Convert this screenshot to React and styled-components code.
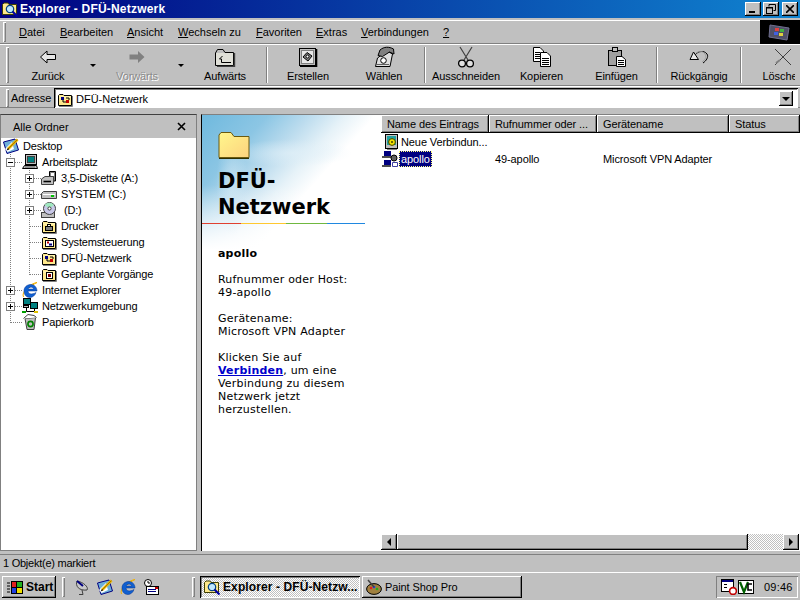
import React from 'react';
import styled, { createGlobalStyle, css } from 'styled-components';

const Global = createGlobalStyle`
  html, body { margin: 0; padding: 0; background: #c0c0c0; }
  * { box-sizing: border-box; }
  body { font-family: "Liberation Sans", Arial, sans-serif; font-size: 11px; color: #000; }
`;

const raised = css`
  box-shadow: inset -1px -1px 0 #000, inset 1px 1px 0 #fff, inset -2px -2px 0 #808080;
`;
const sunken = css`
  box-shadow: inset 1px 1px 0 #000, inset -1px -1px 0 #fff, inset 2px 2px 0 #808080;
`;
const checker = css`
  background: repeating-conic-gradient(#fff 0 25%, #c0c0c0 0 50%) 0 0 / 2px 2px;
`;

const Page = styled.div`
  width: 800px;
  height: 600px;
  overflow: hidden;
  display: flex;
  flex-direction: column;
  background: #c0c0c0;
`;

const TitleBar = styled.div`
  height: 18px;
  flex: none;
  display: flex;
  align-items: center;
  padding: 0 2px;
  gap: 2px;
  background: linear-gradient(90deg, #000080, #1084d0);
`;
const TitleText = styled.div`
  flex: 1;
  color: #fff;
  font-weight: bold;
  font-size: 12px;
  letter-spacing: 0.2px;
`;
const WinButton = styled.div`
  width: 16px;
  height: 14px;
  margin-left: ${p => p.$gap || 0}px;
  background: #c0c0c0;
  display: flex;
  align-items: center;
  justify-content: center;
  ${raised}
`;

const Band = styled.div`
  flex: none;
  height: ${p => p.$h}px;
  margin-top: ${p => p.$mt || 0}px;
  padding-top: ${p => p.$pt || 0}px;
  display: flex;
  align-items: center;
  overflow: hidden;
  box-shadow: inset 0 1px 0 #fff, inset 0 -1px 0 #808080;
`;
const Grip = styled.div`
  flex: none;
  width: 3px;
  height: ${p => p.$h || 20}px;
  margin-left: ${p => p.$left}px;
  margin-right: ${p => p.$right || 0}px;
  box-shadow: inset 1px 1px 0 #fff, inset -1px -1px 0 #808080;
`;

const MenuItem = styled.div`
  width: ${p => p.$w}px;
  flex: none;
  u { text-decoration: underline; }
`;
const LogoBox = styled.div`
  margin-left: auto;
  width: 40px;
  height: 24px;
  background: #000;
  display: flex;
  align-items: center;
  justify-content: center;
`;

const ToolRow = styled.div`
  width: 795px;
  display: flex;
  align-items: center;
  overflow: hidden;
`;
const ToolButton = styled.div`
  flex: none;
  width: ${p => p.$w}px;
  height: 40px;
  display: flex;
  flex-direction: column;
  align-items: center;
  justify-content: flex-end;
  gap: 1px;
  padding-bottom: 3px;
  white-space: nowrap;
  letter-spacing: -0.1px;
  color: ${p => (p.$off ? '#8a8a8a' : '#000')};
  text-shadow: ${p => (p.$off ? '1px 1px 0 #fff' : 'none')};
`;
const ToolIcon = styled.div`
  height: 24px;
  display: flex;
  align-items: center;
  justify-content: center;
`;
const DropCell = styled.div`
  flex: none;
  width: ${p => p.$w}px;
  display: flex;
  justify-content: center;
  &::after {
    content: '';
    border: 3px solid transparent;
    border-top: 3px solid #000;
    border-bottom: 0;
  }
`;
const ToolSep = styled.div`
  flex: none;
  width: 2px;
  height: 36px;
  margin: 0 2px;
  box-shadow: inset 1px 0 0 #808080, inset -1px 0 0 #fff;
`;

const AddressLabel = styled.div`
  margin: 0 5px 0 2px;
  width: 38px;
  flex: none;
`;
const AddressField = styled.div`
  flex: 1;
  height: 20px;
  background: #fff;
  margin-right: 2px;
  display: flex;
  align-items: center;
  padding: 1px 5px 0 3px;
  gap: 3px;
  ${sunken}
`;
const ComboButton = styled.div`
  margin-left: auto;
  width: 14px;
  height: 15px;
  background: #c0c0c0;
  display: flex;
  align-items: center;
  justify-content: center;
  ${raised}
  &::after {
    content: '';
    border: 4px solid transparent;
    border-top: 4px solid #000;
    border-bottom: 0;
  }
`;

const Main = styled.div`
  margin-top: 6px;
  height: 437px;
  flex: none;
  display: flex;
`;
const TreePane = styled.div`
  width: 197px;
  flex: none;
  background: #fff;
  border: 1px solid #808080;
  border-top-color: #404040;
`;
const TreeHeader = styled.div`
  height: 23px;
  background: #c0c0c0;
  display: flex;
  align-items: center;
  justify-content: space-between;
  padding: 0 10px 0 12px;
`;
const TreeRow = styled.div`
  height: 16px;
  display: flex;
  align-items: center;
  white-space: nowrap;
`;
const TreeCell = styled.div`
  position: relative;
  flex: none;
  width: 19px;
  height: 16px;
  ${p => (p.$kind === 'pipe' || p.$kind === 'branch' || p.$kind === 'box' || p.$kind === 'minus') && css`
    background-image: repeating-linear-gradient(#808080 0 1px, transparent 1px 2px);
    background-size: 1px 100%;
    background-position: 9px 0;
    background-repeat: no-repeat;
  `}
  ${p => p.$kind === 'last' && css`
    background-image: repeating-linear-gradient(#808080 0 1px, transparent 1px 2px);
    background-size: 1px 9px;
    background-position: 9px 0;
    background-repeat: no-repeat;
  `}
  ${p => p.$kind !== 'pipe' && p.$kind !== 'none' && css`
    &::after {
      content: '';
      position: absolute;
      left: 10px;
      right: -2px;
      top: 8px;
      height: 1px;
      background: repeating-linear-gradient(90deg, #808080 0 1px, transparent 1px 2px);
    }
  `}
`;
const Expander = styled.div`
  position: absolute;
  z-index: 1;
  left: 5px;
  top: 4px;
  width: 9px;
  height: 9px;
  background: #fff;
  border: 1px solid #808080;
  &::before {
    content: '';
    position: absolute;
    left: 1px;
    right: 1px;
    top: 3px;
    height: 1px;
    background: #000;
  }
  ${p => p.$plus && css`
    &::after {
      content: '';
      position: absolute;
      top: 1px;
      bottom: 1px;
      left: 3px;
      width: 1px;
      background: #000;
    }
  `}
`;
const TreeIconSlot = styled.div`
  flex: none;
  width: 16px;
  height: 16px;
  margin-left: 2px;
  margin-right: 4px;
  display: flex;
`;
const TreeLabel = styled.span`
  letter-spacing: -0.15px;
  white-space: pre;
`;

const Splitter = styled.div`
  width: 4px;
  flex: none;
`;
const ContentPane = styled.div`
  flex: 1;
  display: flex;
  border-top: 1px solid #808080;
  border-left: 1px solid #000;
  background: #fff;
  min-width: 0;
`;
const InfoPane = styled.div`
  width: 179px;
  flex: none;
  display: flex;
  flex-direction: column;
  padding-top: 17px;
  font-family: "DejaVu Sans", Verdana, sans-serif;
  font-size: 11px;
  line-height: 13px;
  background:
    radial-gradient(ellipse 60px 14px at 90px 38px, rgba(225,240,248,.7), transparent),
    radial-gradient(ellipse 16px 50px at 30px 70px, rgba(215,235,245,.6), transparent),
    linear-gradient(to bottom, rgba(255,255,255,0) 70px, #fff 135px) 0 0 / 179px 135px no-repeat,
    linear-gradient(132deg, #6fb9de 0, #8cc6e4 22%, #bcdcee 36%, #e6f2f8 48%, #fff 58%) 0 0 / 179px 135px no-repeat;
`;
const InfoIcon = styled.div`
  margin-left: 16px;
  height: 27px;
`;
const InfoTitle = styled.div`
  margin: 9px 0 0 16px;
  font-size: 21px;
  line-height: 26px;
  font-weight: bold;
`;
const Rainbow = styled.div`
  display: flex;
  height: 1px;
  width: 163px;
  margin-top: 3px;
`;
const RainbowPart = styled.div`
  width: ${p => p.$w}px;
  background: ${p => p.$c};
`;
const InfoBody = styled.div`
  margin: 23px 0 0 16px;
  width: 160px;
  letter-spacing: 0.2px;
`;
const InfoPara = styled.p`
  margin: 0 0 13px;
`;
const InfoLink = styled.span`
  color: #0000cc;
  font-weight: bold;
  text-decoration: underline;
`;

const ListPane = styled.div`
  flex: 1;
  min-width: 0;
  display: flex;
  flex-direction: column;
  background: #fff;
`;
const ColHeader = styled.div`
  display: flex;
  height: 18px;
  flex: none;
`;
const ColCell = styled.div`
  flex: none;
  width: ${p => p.$w}px;
  background: #c0c0c0;
  display: flex;
  align-items: center;
  padding-left: 6px;
  letter-spacing: -0.1px;
  white-space: nowrap;
  ${raised}
`;
const ListBody = styled.div`
  flex: 1;
`;
const ListRow = styled.div`
  height: 17px;
  display: flex;
  align-items: center;
  white-space: nowrap;
  letter-spacing: -0.1px;
`;
const NameCell = styled.div`
  width: 114px;
  flex: none;
  display: flex;
  align-items: center;
  padding-left: ${p => (p.$sel ? 1 : 3)}px;
  gap: 1px;
`;
const Selected = styled.span`
  background: #000080;
  color: #fff;
  outline: 1px dotted #ffff80;
  outline-offset: -1px;
  padding: 0 2px;
  line-height: 16px;
`;
const ValueCell = styled.div`
  width: ${p => p.$w}px;
  flex: none;
`;
const ScrollBar = styled.div`
  height: 17px;
  flex: none;
  display: flex;
  padding-right: 1px;
`;
const ScrollButton = styled.div`
  width: 16px;
  height: 16px;
  flex: none;
  background: #c0c0c0;
  display: flex;
  align-items: center;
  justify-content: center;
  ${raised}
  &::after {
    content: '';
    border: 4px solid transparent;
    ${p => (p.$left
      ? 'border-right: 4px solid #000; border-left: 0;'
      : 'border-left: 4px solid #000; border-right: 0;')}
  }
`;
const ScrollThumb = styled.div`
  width: 351px;
  height: 16px;
  flex: none;
  background: #c0c0c0;
  ${raised}
`;
const ScrollTrack = styled.div`
  flex: 1;
  height: 16px;
  ${checker}
`;

const StatusBar = styled.div`
  margin-top: 3px;
  height: 17px;
  flex: none;
  display: flex;
  align-items: center;
  padding-left: 3px;
  box-shadow: inset 0 1px 0 #808080;
  letter-spacing: -0.25px;
`;

const TaskBar = styled.div`
  margin-top: 1px;
  flex: 1;
  display: flex;
  align-items: center;
  padding: 2px 2px 0;
  box-shadow: inset 0 1px 0 #fff;
`;
const StartButton = styled.div`
  width: 54px;
  height: 22px;
  flex: none;
  display: flex;
  align-items: center;
  gap: 2px;
  padding-left: 4px;
  font-weight: bold;
  font-size: 12px;
  ${raised}
`;
const QuickIcon = styled.div`
  width: 16px;
  height: 16px;
  flex: none;
  margin-left: ${p => p.$left}px;
  display: flex;
`;
const TaskButton = styled.div`
  width: 160px;
  height: 22px;
  flex: none;
  margin-left: ${p => p.$left || 0}px;
  display: flex;
  align-items: center;
  gap: 3px;
  padding-left: 4px;
  white-space: nowrap;
  overflow: hidden;
  font-size: ${p => (p.$active ? 12 : 11)}px;
  font-weight: ${p => (p.$active ? 'bold' : 'normal')};
  letter-spacing: ${p => (p.$active ? 0.1 : -0.1)}px;
  ${p => (p.$active ? checker : '')}
  ${p => (p.$active ? sunken : raised)}
`;
const Tray = styled.div`
  margin-left: auto;
  width: 82px;
  height: 22px;
  flex: none;
  display: flex;
  align-items: center;
  padding-left: 5px;
  gap: 1px;
  box-shadow: inset 1px 1px 0 #808080, inset -1px -1px 0 #fff;
`;
const Clock = styled.div`
  margin-left: 9px;
  letter-spacing: 0.2px;
`;

const Ico = ({ w = 16, h = 16, children }) => (
  <svg width={w} height={h} viewBox={`0 0 ${w} ${h}`} style={{ display: 'block' }}>{children}</svg>
);

const Folder = ({ children }) => (
  <Ico>
    <path d="M1.5 4.5 L2.5 3.5 H6 L7 4.5 H14.5 V14.5 H1.5 Z" fill="#ffe98c" stroke="#000" />
    <path d="M2 6 H14" stroke="#fff8c8" />
    <path d="M15.5 5 V15.5 H2" stroke="#808080" fill="none" />
    {children}
  </Ico>
);

const ExplorerIcon = () => (
  <Ico>
    <path d="M0.5 3.5 L2 2 H6 L7 3.5 H14.5 V13.5 H0.5 Z" fill="#ffe98c" stroke="#404000" />
    <circle cx="8" cy="8" r="3.7" fill="#bfe8ff" stroke="#004080" strokeWidth="1.2" />
    <path d="M10.5 10.5 L15.5 15.5" stroke="#0000a0" strokeWidth="2.2" />
  </Ico>
);

const DialFolder = () => (
  <Folder>
    <rect x="4" y="6" width="3" height="3" fill="#000080" />
    <rect x="9" y="9" width="3" height="3" fill="#c00000" />
    <path d="M6 9 V11 H9 M9 7 H12 V9" stroke="#000" fill="none" />
  </Folder>
);
const PrinterFolder = () => (
  <Folder>
    <rect x="4.5" y="8.5" width="7" height="4" fill="#808080" stroke="#000" />
    <rect x="6.5" y="6.5" width="3" height="2" fill="#fff" stroke="#000" />
  </Folder>
);
const ControlFolder = () => (
  <Folder>
    <rect x="4.5" y="6.5" width="8" height="6" fill="#fff" stroke="#000" />
    <path d="M6 8.5 H8" stroke="#c00000" strokeWidth="2" />
    <path d="M8 10.5 H11" stroke="#000080" strokeWidth="2" />
  </Folder>
);
const TaskFolder = () => (
  <Folder>
    <rect x="5.5" y="6.5" width="6" height="6" fill="#fff" stroke="#000" />
    <rect x="7" y="8" width="3" height="3" fill="#800000" />
  </Folder>
);

const DesktopIcon = () => (
  <Ico>
    <path d="M0.5 4 L12 1 L15.5 12 L4 15.5 Z" fill="#6fb0d8" stroke="#000080" />
    <path d="M2 11 L9 4 L11 11 L4.5 14 Z" fill="#fff" />
    <path d="M5 11 L14.5 1.5" stroke="#e8b800" strokeWidth="2.6" />
    <path d="M5 11 L14.5 1.5" stroke="#804000" strokeWidth="0.6" />
    <path d="M3.5 12.5 L5 10 L6 11.5 Z" fill="#000" />
  </Ico>
);
const ComputerIcon = () => (
  <Ico>
    <rect x="3.5" y="0.5" width="11" height="10" fill="#c0c0c0" stroke="#000" />
    <rect x="5.5" y="2.5" width="7" height="6" fill="#008080" stroke="#404040" />
    <path d="M2.5 11.5 H14.5 L15.5 14.5 H0.5 Z" fill="#c0c0c0" stroke="#000" />
    <path d="M3 13 H13" stroke="#606060" />
  </Ico>
);
const FloppyIcon = () => (
  <Ico>
    <path d="M8.5 1.5 H14.5 V11 H8.5 Z" fill="#808080" stroke="#000" />
    <rect x="10" y="3" width="3" height="3" fill="#fff" />
    <path d="M0.5 9 L4 6.5 H12.5 V14.5 H0.5 Z" fill="#c0c0c0" stroke="#404040" />
    <path d="M2.5 11.5 H10" stroke="#000" strokeWidth="1.6" />
  </Ico>
);
const DriveIcon = () => (
  <Ico>
    <path d="M0.5 7.5 L2.5 5.5 H15.5 V12.5 H0.5 Z" fill="#c0c0c0" stroke="#404040" />
    <path d="M2 8.5 H14" stroke="#fff" />
    <rect x="10" y="9" width="3" height="2" fill="#00c000" />
  </Ico>
);
const CdIcon = () => (
  <Ico>
    <rect x="0.5" y="10.5" width="13" height="5" fill="#c0c0c0" stroke="#404040" />
    <circle cx="8.5" cy="6.5" r="6" fill="#c8c8e8" stroke="#404040" />
    <path d="M8.5 6.5 L3.5 3 A6 6 0 0 1 13 3 Z" fill="#a0e8c0" />
    <circle cx="8.5" cy="6.5" r="1.6" fill="#fff" stroke="#404040" />
  </Ico>
);
const IeIcon = () => (
  <Ico>
    <path d="M1.5 15 C-1 10 8 1.5 15 0.5 C12 2 9 4 7 6" stroke="#f0b000" fill="none" />
    <path d="M2 9 C2 5 5 2.5 9 2.5 C12.5 2.5 15 5.5 15 9 H6 C6 12 10 13 14 10.5 C13 14 10 15.5 8 15.5 C4 15.5 2 12.5 2 9 Z M6 7 H11.5 C11.5 4.5 7 4.5 6 7 Z" fill="#1060d0" fillRule="evenodd" stroke="#003090" strokeWidth="0.5" />
  </Ico>
);
const NetworkIcon = () => (
  <Ico>
    <rect x="1.5" y="0.5" width="7" height="6" fill="#008080" stroke="#000" />
    <rect x="8.5" y="4.5" width="7" height="6" fill="#008080" stroke="#000" />
    <rect x="1.5" y="7.5" width="5" height="2" fill="#c0c0c0" stroke="#000" />
    <path d="M4.5 10 V13.5 H12.5 V11" stroke="#000" fill="none" />
    <path d="M0 14 H4" stroke="#00a000" strokeWidth="2" />
    <path d="M12 14 H16" stroke="#e0c000" strokeWidth="2" />
  </Ico>
);
const BinIcon = () => (
  <Ico>
    <path d="M3 4.5 L13.5 3.5 L12 15.5 H5 Z" fill="#c0c0c0" stroke="#404040" />
    <path d="M1.5 4.5 L6 0.5 L12 1.5 L14.5 3.5" fill="#fff" stroke="#404040" />
    <circle cx="8.5" cy="10" r="2.6" fill="none" stroke="#008000" strokeWidth="1.6" />
  </Ico>
);

const BackIcon = () => (
  <Ico w={16} h={14}>
    <path d="M0.5 7 L7 1 V4.5 H15.5 V9.5 H7 V13 Z" fill="#e6e6e6" stroke="#000" />
  </Ico>
);
const ForwardIcon = () => (
  <Ico w={16} h={14}>
    <path d="M15.5 7 L9 1 V4.5 H0.5 V9.5 H9 V13 Z" fill="#808080" />
  </Ico>
);
const UpIcon = () => (
  <Ico w={22} h={19}>
    <path d="M1.5 5 L3.5 1.5 H9 L11 4.5 H19.5 V17.5 H1.5 Z" fill="#c0c0c0" stroke="#000" />
    <rect x="2" y="5" width="17" height="12" fill="#e0e0d8" />
    <path d="M8.5 8 L5.5 11 H7.5 V14.5 H17" stroke="#000" fill="none" />
    <path d="M20.5 5 V18.5 H3" stroke="#404040" fill="none" strokeWidth="1.4" />
  </Ico>
);
const CreateIcon = () => (
  <Ico w={20} h={20}>
    <rect x="1.5" y="1.5" width="16" height="17" fill="#c0c0c0" stroke="#000" />
    <rect x="3.5" y="3.5" width="12" height="13" fill="#e8e8e8" stroke="#808080" />
    <path d="M5 10 L9 5.5 L14 9 L10 14 Z" fill="#808080" stroke="#000" />
    <circle cx="9.5" cy="9.5" r="1.5" fill="#fff" stroke="#000" />
    <path d="M18.5 2 V19.5 H2" stroke="#000" fill="none" strokeWidth="1.6" />
  </Ico>
);
const PhoneIcon = () => (
  <Ico w={22} h={22}>
    <path d="M4.5 12 L14 5 L19.5 8 L17 20.5 H2.5 Z" fill="#e0e0e0" stroke="#000" />
    <path d="M7 4 C11 0.5 16 0.5 20.5 3 L21 8 L16.5 6 L9.5 10.5 L5 9.5 Z" fill="#808080" stroke="#000" />
    <circle cx="10.5" cy="14.5" r="2.8" fill="#fff" stroke="#000" />
    <path d="M3 18.5 H16" stroke="#606060" />
  </Ico>
);
const ScissorsIcon = () => (
  <Ico w={18} h={22}>
    <path d="M3 1 L11 14 M15 1 L7 14" stroke="#404040" strokeWidth="1.2" />
    <circle cx="5" cy="17.5" r="3.4" fill="#e0e0e0" stroke="#000" strokeWidth="1.3" />
    <circle cx="13" cy="17.5" r="3.4" fill="#e0e0e0" stroke="#000" strokeWidth="1.3" />
  </Ico>
);
const CopyIcon = () => (
  <Ico w={20} h={20}>
    <path d="M1.5 0.5 H8 L11.5 4 V14.5 H1.5 Z" fill="#fff" stroke="#000" />
    <path d="M3 5.5 H8 M3 7.5 H8 M3 9.5 H8 M3 11.5 H8" stroke="#000" />
    <path d="M8.5 5.5 H15 L18.5 9 V19.5 H8.5 Z" fill="#fff" stroke="#000" />
    <path d="M10 11.5 H17 M10 13.5 H17 M10 15.5 H17 M10 17.5 H17" stroke="#000" />
  </Ico>
);
const PasteIcon = () => (
  <Ico w={20} h={20}>
    <rect x="1.5" y="3.5" width="13" height="15" fill="#a0a0a0" stroke="#000" />
    <rect x="5.5" y="0.5" width="5" height="4" fill="#c0c0c0" stroke="#000" />
    <path d="M9.5 9.5 H15 L18.5 12.5 V19.5 H9.5 Z" fill="#fff" stroke="#000" />
    <path d="M11 13.5 H17 M11 15.5 H17 M11 17.5 H17" stroke="#000" />
  </Ico>
);
const UndoIcon = () => (
  <Ico w={20} h={18}>
    <path d="M6 7 C9 3 15 2 18 6 C20 9 17 13 14 15" fill="none" stroke="#000" />
    <path d="M7 5 C10 3 14 3 16 6 C18 9 16 12 13 14" fill="none" stroke="#a0a0a0" />
    <path d="M1 11.5 H9.5 L4.5 4 Z" fill="#e6e6e6" stroke="#000" />
  </Ico>
);
const DeleteIcon = () => (
  <Ico w={20} h={20}>
    <path d="M2 2 L18 18" stroke="#404040" />
    <path d="M18 2 L2 18" stroke="#404040" />
    <path d="M3 16 L7 13" stroke="#808080" strokeWidth="2" />
  </Ico>
);

const BigFolder = () => (
  <Ico w={32} h={27}>
    <defs>
      <linearGradient id="bigFolderFill" x1="0" y1="0" x2="1" y2="1">
        <stop offset="0" stopColor="#fff78c" />
        <stop offset="1" stopColor="#fdd27e" />
      </linearGradient>
    </defs>
    <path d="M1 25.5 V3 L3 0.5 H13 L16 4.5 H31 V25.5 Z" fill="url(#bigFolderFill)" stroke="#6a5a10" />
    <path d="M1 26.5 H31" stroke="#303000" />
  </Ico>
);
const NewConnIcon = () => (
  <Ico>
    <rect x="1.5" y="0.5" width="12" height="14" fill="#c0c0c0" stroke="#000" />
    <rect x="3" y="2" width="9" height="9" fill="#20a0a0" />
    <circle cx="8" cy="8" r="3.4" fill="#f0e000" stroke="#404000" />
    <circle cx="8" cy="8" r="1" fill="#404000" />
    <path d="M3 15.5 H13" stroke="#808080" />
  </Ico>
);
const ConnIcon = () => (
  <Ico>
    <rect x="2" y="0" width="7" height="5" fill="#000080" />
    <path d="M0 6 H9" stroke="#000" strokeWidth="1.4" />
    <rect x="2" y="9" width="7" height="5" fill="#000080" />
    <path d="M0 15 H9" stroke="#000" strokeWidth="1.4" />
    <circle cx="12" cy="7" r="3" fill="#606060" stroke="#000" />
    <path d="M10.5 11.5 H15.5 V15.5 H10.5 Z" fill="#fff" stroke="#4040a0" />
  </Ico>
);

const Flag = () => (
  <Ico w={18} h={16}>
    <path d="M1 4 H4 M1 7 H4 M1 10 H4 M1 13 H4" stroke="#000" />
    <rect x="5.5" y="2.5" width="5" height="6" fill="#e02020" stroke="#000" />
    <rect x="10.5" y="2.5" width="6" height="6" fill="#20b020" stroke="#000" />
    <rect x="5.5" y="8.5" width="5" height="6" fill="#2040e0" stroke="#000" />
    <rect x="10.5" y="8.5" width="6" height="6" fill="#f0e000" stroke="#000" />
  </Ico>
);
const LogoIcon = () => (
  <Ico w={24} h={20}>
    <path d="M2 3 L21 6 L19 18 L1 15 Z" fill="#505068" stroke="#707090" />
    <rect x="7" y="6" width="4" height="3" fill="#e04040" />
    <rect x="12" y="7" width="4" height="3" fill="#40b040" />
    <rect x="6" y="10" width="4" height="3" fill="#4060e0" />
    <rect x="11" y="11" width="4" height="3" fill="#e0d040" />
  </Ico>
);
const DishIcon = () => (
  <Ico>
    <path d="M3 2 C1 7 5 12 13 11 C15 8 9 3 3 2 Z" fill="#c8c8c8" stroke="#404040" />
    <path d="M3 2 L9 7" stroke="#000080" strokeWidth="2" />
    <path d="M8 11 L9 15.5 H5" stroke="#404040" fill="none" />
  </Ico>
);
const MailClockIcon = () => (
  <Ico>
    <circle cx="5" cy="4" r="3.5" fill="#fff" stroke="#000" />
    <path d="M5 2 V4 H7" stroke="#000" fill="none" />
    <rect x="3.5" y="7.5" width="12" height="8" fill="#fff" stroke="#000" />
    <path d="M5 10.5 H13 M5 12.5 H13" stroke="#000080" />
    <rect x="12" y="8" width="3" height="2" fill="#c00000" />
  </Ico>
);
const PaletteIcon = () => (
  <Ico>
    <ellipse cx="8" cy="10" rx="7.4" ry="5.4" fill="#a08040" stroke="#000" />
    <circle cx="5" cy="9" r="1.3" fill="#e02020" />
    <circle cx="8" cy="8" r="1.3" fill="#2040e0" />
    <circle cx="11" cy="10" r="1.3" fill="#20b020" />
    <path d="M2 1 L8 8" stroke="#404040" strokeWidth="1.5" />
  </Ico>
);
const CalendarIcon = () => (
  <Ico>
    <rect x="0.5" y="0.5" width="12" height="12" fill="#fff" stroke="#000" />
    <path d="M1 2 H12" stroke="#000080" strokeWidth="2" />
    <path d="M3 5.5 H6 M3 8.5 H6" stroke="#000" />
    <circle cx="12" cy="12" r="3.4" fill="#fff" stroke="#c00000" strokeWidth="1.6" />
  </Ico>
);
const VcIcon = () => (
  <Ico>
    <rect x="0.5" y="1.5" width="15" height="13" fill="#fff" stroke="#000" />
    <path d="M2 3 L6 13 L10 3" stroke="#006000" strokeWidth="2.2" fill="none" />
    <path d="M14 5 H10 V11 H14" stroke="#000" strokeWidth="1.6" fill="none" />
  </Ico>
);

const menu = [
  ['D', 'atei', 41], ['B', 'earbeiten', 67], ['A', 'nsicht', 51], ['W', 'echseln zu', 78],
  ['F', 'avoriten', 60], ['E', 'xtras', 45], ['V', 'erbindungen', 82], ['?', '', 20],
];

const tools = [
  { label: 'Zurück', w: 78, icon: <BackIcon />, drop: 11 },
  { label: 'Vorwärts', w: 78, icon: <ForwardIcon />, drop: 10, off: true },
  { label: 'Aufwärts', w: 78, icon: <UpIcon />, sep: true },
  { label: 'Erstellen', w: 76, icon: <CreateIcon /> },
  { label: 'Wählen', w: 76, icon: <PhoneIcon />, sep: true },
  { label: 'Ausschneiden', w: 76, icon: <ScissorsIcon /> },
  { label: 'Kopieren', w: 75, icon: <CopyIcon /> },
  { label: 'Einfügen', w: 75, icon: <PasteIcon />, sep: true },
  { label: 'Rückgängig', w: 78, icon: <UndoIcon />, sep: true },
  { label: 'Löschen', w: 78, icon: <DeleteIcon /> },
];

const tree = [
  { cells: [], icon: <DesktopIcon />, label: 'Desktop' },
  { cells: ['minus'], icon: <ComputerIcon />, label: 'Arbeitsplatz' },
  { cells: ['pipe', 'box'], icon: <FloppyIcon />, label: '3,5-Diskette (A:)' },
  { cells: ['pipe', 'box'], icon: <DriveIcon />, label: 'SYSTEM (C:)' },
  { cells: ['pipe', 'box'], icon: <CdIcon />, label: ' (D:)' },
  { cells: ['pipe', 'branch'], icon: <PrinterFolder />, label: 'Drucker' },
  { cells: ['pipe', 'branch'], icon: <ControlFolder />, label: 'Systemsteuerung' },
  { cells: ['pipe', 'branch'], icon: <DialFolder />, label: 'DFÜ-Netzwerk' },
  { cells: ['pipe', 'last'], icon: <TaskFolder />, label: 'Geplante Vorgänge' },
  { cells: ['box'], icon: <IeIcon />, label: 'Internet Explorer' },
  { cells: ['box'], icon: <NetworkIcon />, label: 'Netzwerkumgebung' },
  { cells: ['last'], icon: <BinIcon />, label: 'Papierkorb' },
];

export default function App() {
  return (
    <Page>
      <Global />
      <TitleBar>
        <ExplorerIcon />
        <TitleText>Explorer - DFÜ-Netzwerk</TitleText>
        <WinButton>
          <Ico w={8} h={8}><path d="M0 7 H6" stroke="#000" strokeWidth="2" /></Ico>
        </WinButton>
        <WinButton>
          <Ico w={10} h={10}>
            <path d="M3 2.5 V0.5 H9.5 V6.5 H7.5" fill="none" stroke="#000" />
            <rect x="0.5" y="3.5" width="6" height="6" fill="none" stroke="#000" />
            <path d="M1 4 H7" stroke="#000" />
          </Ico>
        </WinButton>
        <WinButton $gap={1}>
          <Ico w={8} h={8}><path d="M0 0 L8 8 M8 0 L0 8" stroke="#000" strokeWidth="1.6" /></Ico>
        </WinButton>
      </TitleBar>

      <Band $h={24} $mt={2}>
        <Grip $left={3} $right={13} />
        {menu.map(([key, rest, w]) => (
          <MenuItem key={key} $w={w}><u>{key}</u>{rest}</MenuItem>
        ))}
        <LogoBox><LogoIcon /></LogoBox>
      </Band>

      <Band $h={42}>
        <ToolRow>
          <Grip $left={6} $h={36} />
          {tools.map(t => (
            <React.Fragment key={t.label}>
              <ToolButton $w={t.w} $off={t.off}>
                <ToolIcon>{t.icon}</ToolIcon>
                {t.label}
              </ToolButton>
              {t.drop && <DropCell $w={t.drop} />}
              {t.sep && <ToolSep />}
            </React.Fragment>
          ))}
        </ToolRow>
      </Band>

      <Band $h={22} $pt={2}>
        <Grip $left={6} $h={18} />
        <AddressLabel>Adresse</AddressLabel>
        <AddressField>
          <DialFolder />
          DFÜ-Netzwerk
          <ComboButton />
        </AddressField>
      </Band>

      <Main>
        <TreePane>
          <TreeHeader>
            Alle Ordner
            <Ico w={9} h={9}><path d="M1 1 L8 8 M8 1 L1 8" stroke="#000" strokeWidth="1.6" /></Ico>
          </TreeHeader>
          {tree.map(n => (
            <TreeRow key={n.label}>
              {n.cells.map((k, i) => (
                <TreeCell key={i} $kind={k}>
                  {k === 'minus' && <Expander />}
                  {k === 'box' && <Expander $plus />}
                </TreeCell>
              ))}
              <TreeIconSlot>{n.icon}</TreeIconSlot>
              <TreeLabel>{n.label}</TreeLabel>
            </TreeRow>
          ))}
        </TreePane>
        <Splitter />
        <ContentPane>
          <InfoPane>
            <InfoIcon><BigFolder /></InfoIcon>
            <InfoTitle>DFÜ-<br />Netzwerk</InfoTitle>
            <Rainbow>
              <RainbowPart $w={39} $c="#e04030" />
              <RainbowPart $w={45} $c="#ffc830" />
              <RainbowPart $w={41} $c="#70b840" />
              <RainbowPart $w={38} $c="#2088e0" />
            </Rainbow>
            <InfoBody>
              <InfoPara><b>apollo</b></InfoPara>
              <InfoPara>Rufnummer oder Host:<br />49-apollo</InfoPara>
              <InfoPara>Gerätename:<br />Microsoft VPN Adapter</InfoPara>
              <InfoPara>Klicken Sie auf<br /><InfoLink>Verbinden</InfoLink>, um eine<br />Verbindung zu diesem<br />Netzwerk jetzt<br />herzustellen.</InfoPara>
            </InfoBody>
          </InfoPane>
          <ListPane>
            <ColHeader>
              <ColCell $w={108}>Name des Eintrags</ColCell>
              <ColCell $w={108}>Rufnummer oder ...</ColCell>
              <ColCell $w={132}>Gerätename</ColCell>
              <ColCell $w={71}>Status</ColCell>
            </ColHeader>
            <ListBody>
              <ListRow>
                <NameCell><NewConnIcon />Neue Verbindun...</NameCell>
              </ListRow>
              <ListRow>
                <NameCell $sel><ConnIcon /><Selected>apollo</Selected></NameCell>
                <ValueCell $w={108}>49-apollo</ValueCell>
                <ValueCell $w={150}>Microsoft VPN Adapter</ValueCell>
              </ListRow>
            </ListBody>
            <ScrollBar>
              <ScrollButton $left />
              <ScrollThumb />
              <ScrollTrack />
              <ScrollButton />
            </ScrollBar>
          </ListPane>
        </ContentPane>
      </Main>

      <StatusBar>1 Objekt(e) markiert</StatusBar>

      <TaskBar>
        <StartButton><Flag />Start</StartButton>
        <Grip $left={6} $h={20} />
        <QuickIcon $left={9}><DishIcon /></QuickIcon>
        <QuickIcon $left={7}><DesktopIcon /></QuickIcon>
        <QuickIcon $left={7}><IeIcon /></QuickIcon>
        <QuickIcon $left={7}><MailClockIcon /></QuickIcon>
        <Grip $left={33} $h={20} />
        <TaskButton $left={5} $active><ExplorerIcon />Explorer - DFÜ-Netzw...</TaskButton>
        <TaskButton $left={2}><PaletteIcon />Paint Shop Pro</TaskButton>
        <Tray>
          <CalendarIcon />
          <VcIcon />
          <Clock>09:46</Clock>
        </Tray>
      </TaskBar>
    </Page>
  );
}
